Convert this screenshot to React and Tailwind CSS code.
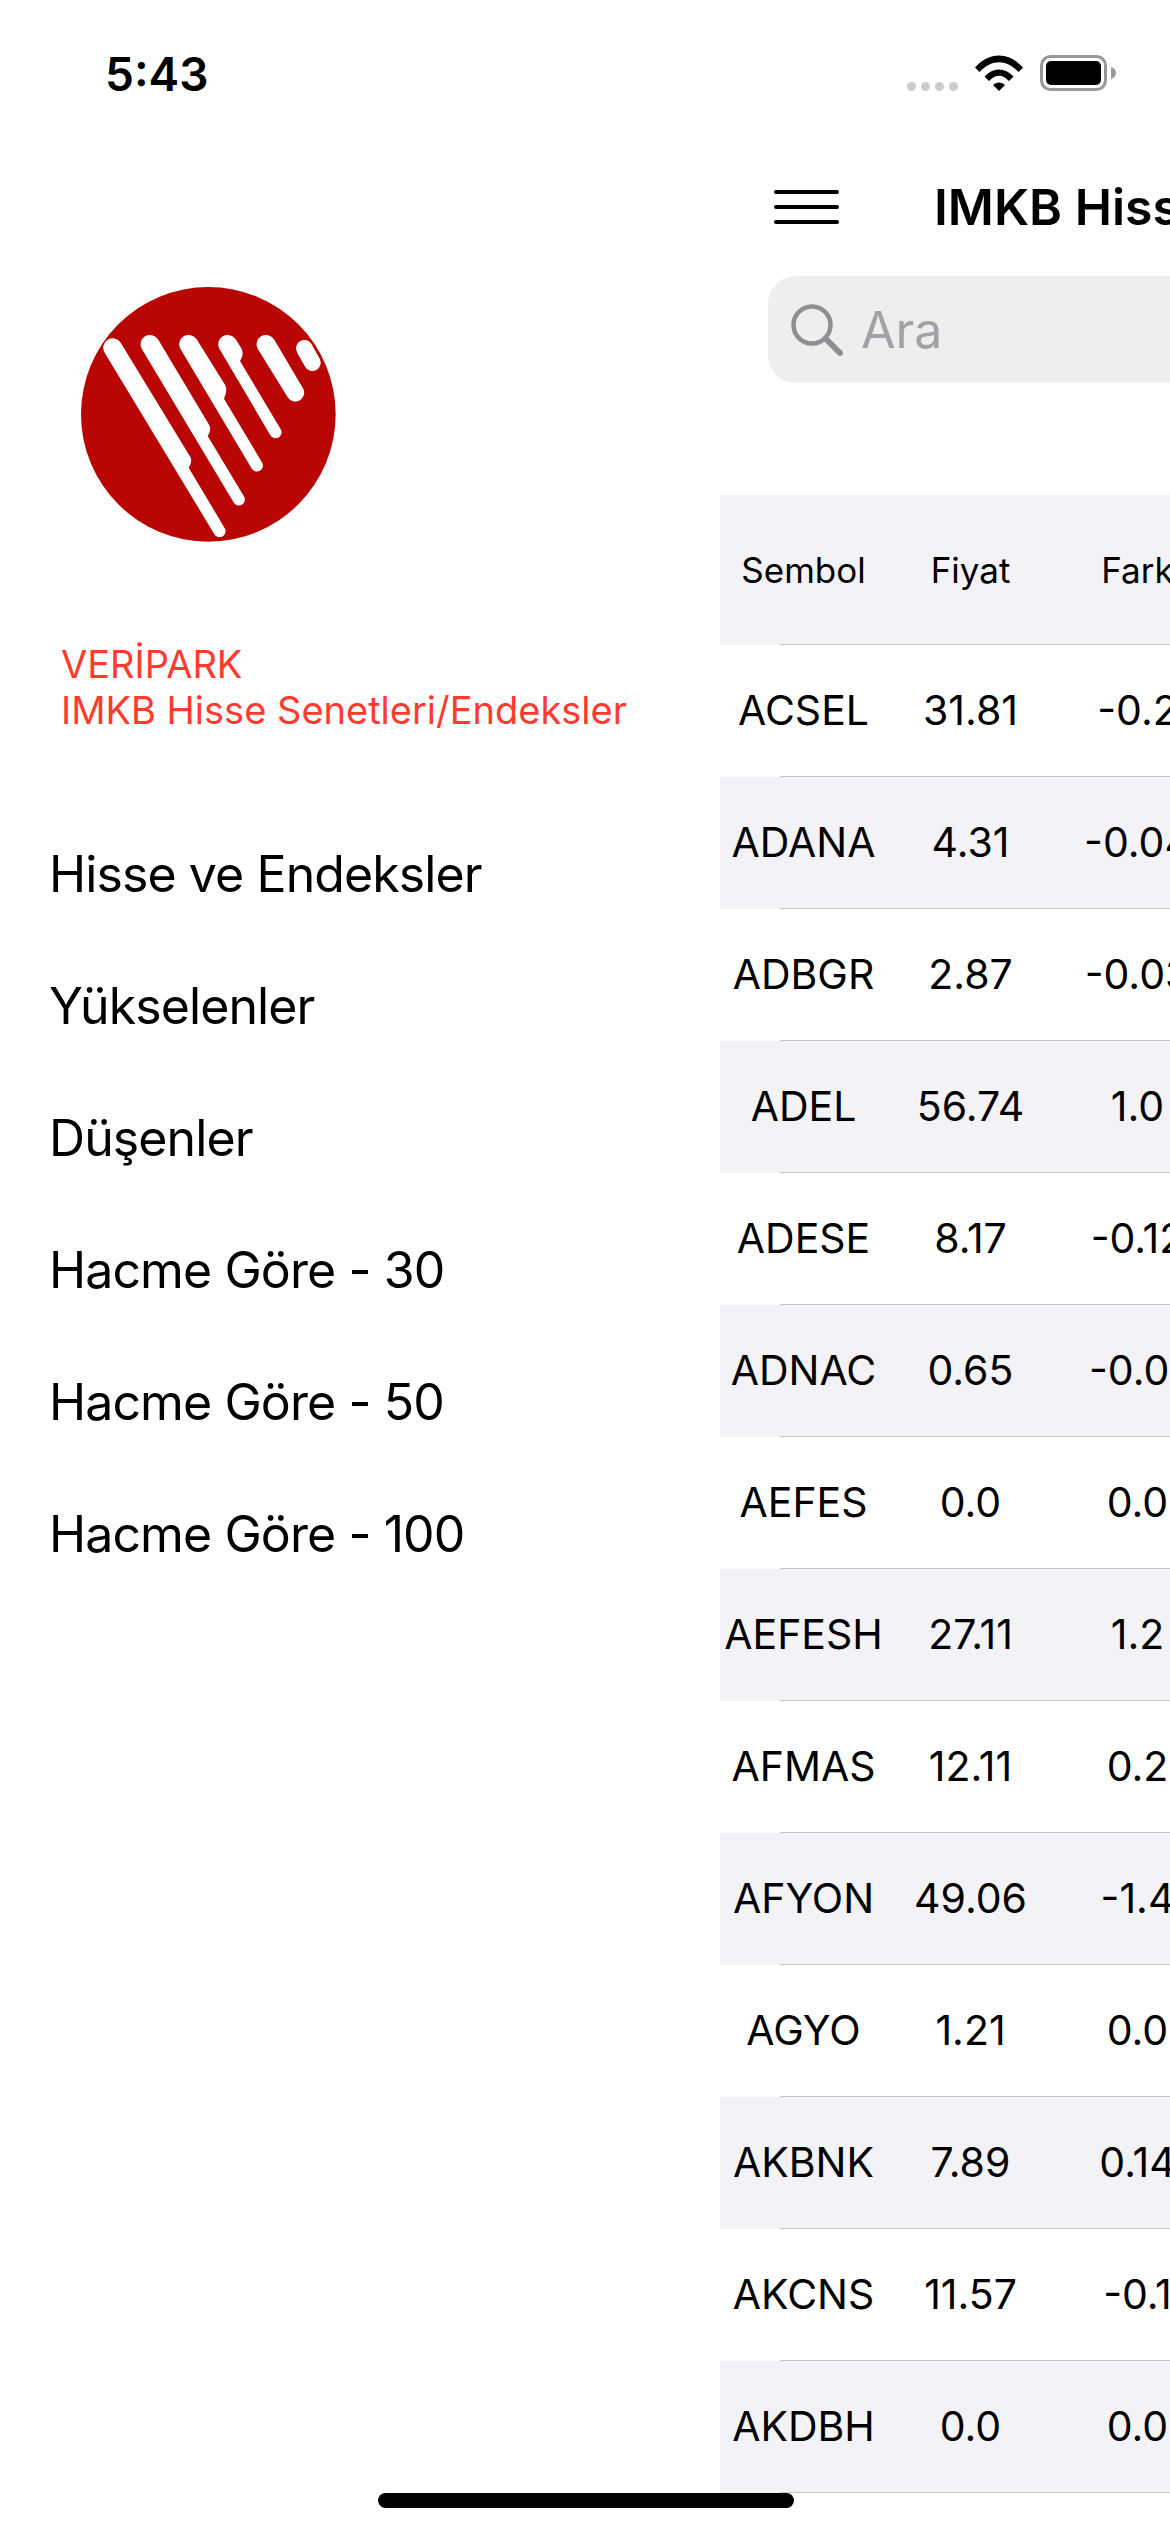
import React from "react";

const menuItems = [
  "Hisse ve Endeksler",
  "Yükselenler",
  "Düşenler",
  "Hacme Göre - 30",
  "Hacme Göre - 50",
  "Hacme Göre - 100",
];

const rows = [
  ["ACSEL", "31.81", "-0.2"],
  ["ADANA", "4.31", "-0.04"],
  ["ADBGR", "2.87", "-0.03"],
  ["ADEL", "56.74", "1.0"],
  ["ADESE", "8.17", "-0.12"],
  ["ADNAC", "0.65", "-0.01"],
  ["AEFES", "0.0", "0.0"],
  ["AEFESH", "27.11", "1.2"],
  ["AFMAS", "12.11", "0.2"],
  ["AFYON", "49.06", "-1.4"],
  ["AGYO", "1.21", "0.0"],
  ["AKBNK", "7.89", "0.14"],
  ["AKCNS", "11.57", "-0.1"],
  ["AKDBH", "0.0", "0.0"],
];

const Logo = () => (
  <svg viewBox="65 50 765 765" className="w-[255px] h-[255px]">
    <circle cx="447" cy="432" r="382" fill="#b90504" />
    <g fill="#fff">
      <path d="M136 247 A28 28 0 0 1 184 217 L393 560 Q400 575 388 592 L497 775 A18 18 0 0 1 466 793 Z" />
      <path d="M248 237 A28 28 0 0 1 296 207 L450 465 Q457 480 445 497 L555 680 A18 18 0 0 1 524 698 Z" />
      <path d="M364 237 A28 28 0 0 1 412 207 L498 345 Q505 362 494 385 L609 578 A18 18 0 0 1 578 596 Z" />
      <path d="M481 237 A28 28 0 0 1 529 207 L547 235 Q555 255 542 272 L665 478 A18 18 0 0 1 634 496 Z" />
      <path d="M596 237 A28 28 0 0 1 644 207 L730 352 A26 26 0 0 1 686 382 Z" />
    </g>
    <path d="M735 234 L759 277" stroke="#fff" strokeWidth="50" strokeLinecap="round" />
  </svg>
);

const StatusBar = () => (
  <div className="absolute top-0 left-0 w-full h-[148px]">
    <span className="absolute left-[105px] top-[46px] text-[46px] leading-[56px] font-semibold text-black">
      5:43
    </span>
    <div className="absolute left-[907px] top-[55px] flex items-center">
      <div className="flex gap-[5px] mt-[27px]">
        <div className="w-[9px] h-[9px] rounded-full bg-[#cccccc]" />
        <div className="w-[9px] h-[9px] rounded-full bg-[#cccccc]" />
        <div className="w-[9px] h-[9px] rounded-full bg-[#cccccc]" />
        <div className="w-[9px] h-[9px] rounded-full bg-[#cccccc]" />
      </div>
      <svg viewBox="0 0 48 36" className="w-[48px] h-[36px] ml-[17px]">
        <path d="M0 12.5 C14 -3.5 34 -3.5 48 12.5 L43.5 17 C31 4 17 4 4.5 17 Z" fill="#000" />
        <path d="M9.5 21.5 C18 12 30 12 38.5 21.5 L34 26 C27 19 21 19 14 26 Z" fill="#000" />
        <path d="M18 30 C21.5 26.5 26.5 26.5 30 30 L24 36 Z" fill="#000" />
      </svg>
      <svg viewBox="0 0 76 36" className="w-[76px] h-[36px] ml-[17px]">
        <rect x="1.5" y="1.5" width="64" height="33" rx="9" fill="none" stroke="#999" strokeWidth="3" />
        <rect x="6" y="6" width="55" height="24" rx="5" fill="#000" />
        <path d="M71 12 C74.5 13 76 15.5 76 18 C76 20.5 74.5 23 71 24 Z" fill="#999" />
      </svg>
    </div>
  </div>
);

const Hamburger = () => (
  <div className="w-[65px] flex flex-col gap-[11px]">
    <div className="h-[4px] rounded-full bg-black" />
    <div className="h-[4px] rounded-full bg-black" />
    <div className="h-[4px] rounded-full bg-black" />
  </div>
);

const App = () => {
  return (
    <div
      className="relative flex w-[1170px] h-[2532px] overflow-hidden bg-white text-black"
      style={{ fontFamily: "Inter, 'Noto Sans', sans-serif" }}
    >
      <StatusBar />

      {/* Drawer */}
      <aside className="w-[720px] shrink-0 pt-[287px]">
        <div className="pl-[81px]">
          <Logo />
        </div>
        <div className="pl-[61px] mt-[99px] text-[38px] leading-[46px] text-[#ff3b30]">
          <div>VERİPARK</div>
          <div>IMKB Hisse Senetleri/Endeksler</div>
        </div>
        <ul className="mt-[75px] pl-[49px]">
          {menuItems.map((item) => (
            <li key={item} className="h-[132px] flex items-center text-[50px] tracking-[-0.9px]">
              {item}
            </li>
          ))}
        </ul>
      </aside>

      {/* Main */}
      <main className="w-[450px] shrink-0 overflow-hidden pt-[176px]">
        <div className="w-[1000px]">
          <div className="flex items-center h-[62px] pl-[54px]">
            <Hamburger />
            <span className="ml-[95px] text-[50px] font-semibold whitespace-nowrap">
              IMKB Hisse ve Endeksler
            </span>
          </div>
          <div className="ml-[48px] mt-[38px] h-[107px] rounded-[28px] bg-[#eeeeef] flex items-center pl-[23px]">
            <svg viewBox="0 0 52 52" className="w-[52px] h-[52px]" fill="none" stroke="#8e8e93" strokeLinecap="round">
              <circle cx="21" cy="21" r="18.5" strokeWidth="4.5" />
              <path d="M34.5 34.5 L49 49" strokeWidth="6" />
            </svg>
            <span className="ml-[18px] mt-[2px] text-[50px] text-[#a1a1a6]">Ara</span>
          </div>

          <div className="mt-[112px]">
            <div className="relative flex h-[150px] items-center bg-[#f2f2f7] text-[35px]">
              <div className="w-[167px] text-center">Sembol</div>
              <div className="w-[167px] text-center">Fiyat</div>
              <div className="w-[167px] text-center">Fark</div>
              <div className="absolute left-[60px] right-0 bottom-0 h-px bg-[#c6c6c8]" />
            </div>
            {rows.map((row, i) => (
              <div
                key={row[0]}
                className={`relative flex h-[132px] items-center text-[41px] ${
                  i % 2 === 1 ? "bg-[#f2f2f7]" : "bg-white"
                }`}
              >
                <div className="w-[167px] text-center">{row[0]}</div>
                <div className="w-[167px] text-center">{row[1]}</div>
                <div className="w-[167px] text-center">{row[2]}</div>
                <div className="absolute left-[60px] right-0 bottom-0 h-px bg-[#c6c6c8]" />
              </div>
            ))}
          </div>
        </div>
      </main>

      {/* Home indicator */}
      <div className="absolute left-[378px] top-[2493px] w-[416px] h-[15px] rounded-full bg-black" />
    </div>
  );
};

export default App;
